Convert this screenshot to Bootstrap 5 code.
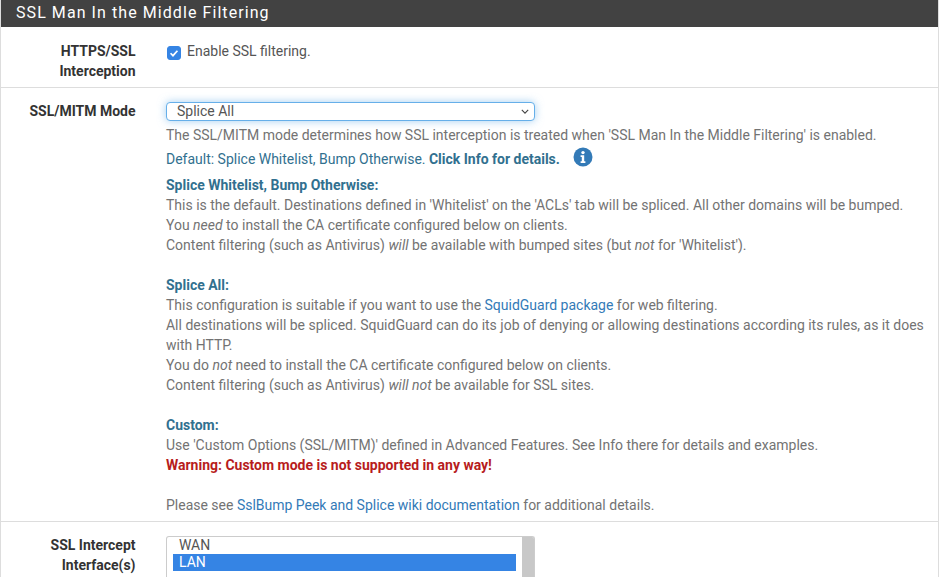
<!DOCTYPE html>
<html lang="en"><head><meta charset="utf-8"><title>SSL Man In the Middle Filtering</title>
<link href="https://cdn.jsdelivr.net/npm/bootstrap@5.3.0/dist/css/bootstrap.min.css" rel="stylesheet">
<style>
html,body{height:577px;overflow:hidden}
body{font-family:Roboto,"Liberation Sans",sans-serif;font-size:13.99px;line-height:20px;color:#555;background:#fff}
.pane{border-left:1px solid #ddd;border-right:1px solid #ddd;margin-top:-1px}
.pane-head{background:#424242;color:#fff;font-size:16px;line-height:20px;letter-spacing:1.07px;padding:4px 15px 4px;height:28px;font-weight:400}
.form-line{display:flex;border-bottom:1px solid #ddd}
.lab{width:134.5px;flex:none;text-align:right;font-weight:700;color:#333}
.val{margin-left:30.5px;flex:1;min-width:0;padding-right:10px}
.l1{padding-top:14px;padding-bottom:6px;height:61px}
.l2{padding-top:13px;padding-bottom:6px;height:434px}
.l3{padding-top:13px;height:60px}
.chk{display:flex;align-items:flex-start;gap:6px;padding-left:1px;margin-top:0}
.chk .form-check-input{width:14px;height:14px;margin:5px 0 0;float:none;background-color:#3584e4;border-color:#3584e4;border-radius:3px;background-size:100% 100%;background-image:url("data:image/svg+xml,%3Csvg xmlns='http://www.w3.org/2000/svg' viewBox='0 0 14 14'%3E%3Cpath d='M3 7.3l2.8 2.8L11 4.4' fill='none' stroke='%23fff' stroke-width='2'/%3E%3C/svg%3E")}
.mode-sel{display:block;width:369px;height:19px;padding:0 0 0 10px;font:13.99px/17px Roboto,sans-serif;color:#555;border:1px solid #66afe9;border-radius:4px;box-shadow:0 0 8px rgba(102,175,233,.6);background:#fff url("data:image/svg+xml,%3Csvg xmlns='http://www.w3.org/2000/svg' viewBox='0 0 10 6'%3E%3Cpath d='M1 1l4 4 4-4' fill='none' stroke='%23444' stroke-width='1.4'/%3E%3C/svg%3E") no-repeat right 5px center/8px 5px;appearance:none;outline:0;margin-top:1px}
.help-txt{color:#737373}
.hlp{margin-top:4px}
.teal{color:#31708f}
.teal-b{color:#31708f;font-weight:700}
.warn{color:#b71c1c;font-weight:700}
a.lnk{color:#337ab7;text-decoration:none}
.info{display:inline-block;vertical-align:1px;margin:-4px 0 -4px 13px;width:20px;height:20px}
.gap{height:20px}
.defl{margin-top:4px;height:26px}
.multi{width:369px;height:60px;border:1px solid #ccc;border-bottom:0;border-radius:3px 3px 0 0;display:flex;margin-top:1px;background:#fff;overflow:hidden}
.multi-in{flex:1;padding:0 6px;line-height:17px}
.multi-in div{padding-left:6px;height:17px}
.multi-in .on{background:#3584e4;color:#fff}
.multi-bar{width:12px;background:#c8c8c8}
</style></head><body>
<div class="pane">
<div class="pane-head">SSL Man In the Middle Filtering</div>
<div class="form-line l1"><div class="lab">HTTPS/SSL Interception</div>
<div class="val"><label class="chk"><input class="form-check-input" type="checkbox" checked><span>Enable SSL filtering.</span></label></div></div>
<div class="form-line l2"><div class="lab">SSL/MITM Mode</div>
<div class="val"><select class="mode-sel"><option>Splice All</option><option>Splice Whitelist, Bump Otherwise</option><option>Custom</option></select>
<div class="help-txt">
<div class="hlp">The SSL/MITM mode determines how SSL interception is treated when 'SSL Man In the Middle Filtering' is enabled.</div>
<div class="defl"><span class="teal">Default: Splice Whitelist, Bump Otherwise.</span> <span class="teal-b">Click Info for details.</span><svg class="info" viewBox="0 0 20 20"><circle cx="10" cy="10" r="9.5" fill="#337ab7"/><circle cx="10" cy="5.6" r="1.7" fill="#fff"/><path d="M7.6 8.3h3.6v6h1.2v1.6H7.6v-1.6h1.2v-4.4H7.6z" fill="#fff"/></svg></div>
<div class="teal-b">Splice Whitelist, Bump Otherwise:</div>
<div>This is the default. Destinations defined in 'Whitelist' on the 'ACLs' tab will be spliced. All other domains will be bumped.</div>
<div>You <i>need</i> to install the CA certificate configured below on clients.</div>
<div>Content filtering (such as Antivirus) <i>will</i> be available with bumped sites (but <i>not</i> for 'Whitelist').</div>
<div class="gap"></div>
<div class="teal-b">Splice All:</div>
<div>This configuration is suitable if you want to use the <a class="lnk" href="#">SquidGuard package</a> for web filtering.</div>
<div>All destinations will be spliced. SquidGuard can do its job of denying or allowing destinations according its rules, as it does with HTTP.</div>
<div>You do <i>not</i> need to install the CA certificate configured below on clients.</div>
<div>Content filtering (such as Antivirus) <i>will not</i> be available for SSL sites.</div>
<div class="gap"></div>
<div class="teal-b">Custom:</div>
<div>Use 'Custom Options (SSL/MITM)' defined in Advanced Features. See Info there for details and examples.</div>
<div class="warn">Warning: Custom mode is not supported in any way!</div>
<div class="gap"></div>
<div>Please see <a class="lnk" href="#">SslBump Peek and Splice wiki documentation</a> for additional details.</div>
</div></div></div>
<div class="form-line l3"><div class="lab">SSL Intercept Interface(s)</div>
<div class="val"><div class="multi"><div class="multi-in"><div>WAN</div><div class="on">LAN</div></div><div class="multi-bar"></div></div></div></div>
</div>
</body></html>
